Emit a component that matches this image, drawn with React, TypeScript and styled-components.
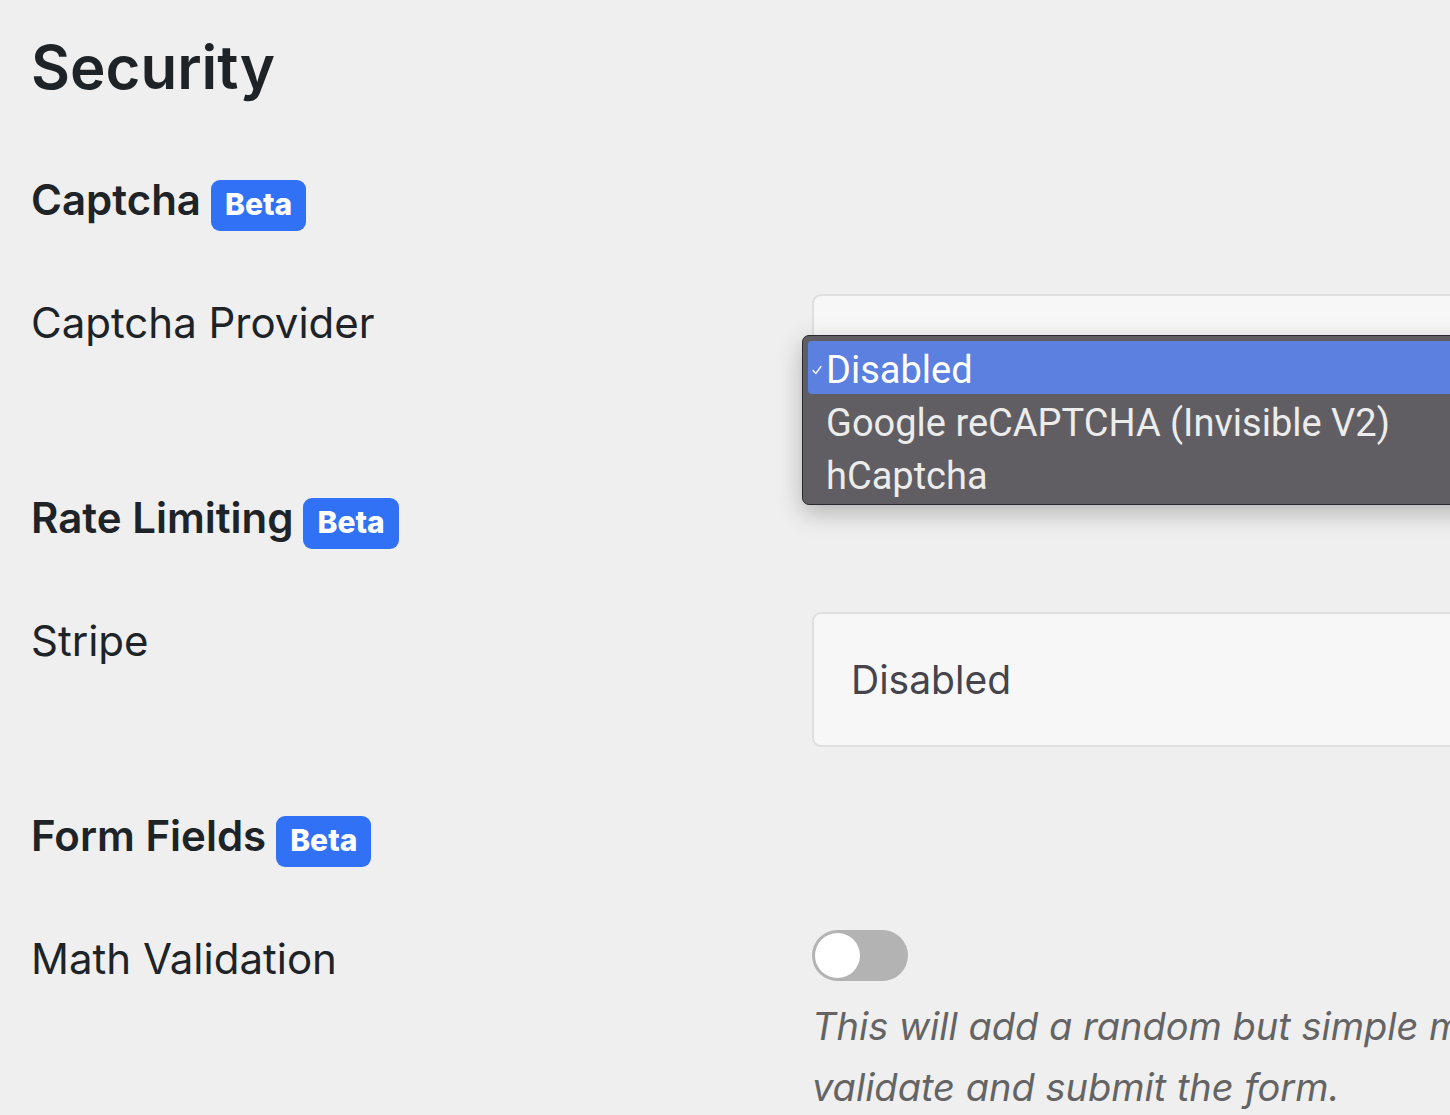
import React from "react";
import styled, { createGlobalStyle } from "styled-components";

const Global = createGlobalStyle`
  html, body { margin: 0; padding: 0; overflow: hidden; }
  body {
    background: #efefef;
    font-family: Inter, "Noto Sans", sans-serif;
    color: #1d2327;
    width: 1450px;
    height: 1115px;
  }
`;

const Page = styled.main`
  padding: 29px 0 0 31px;
`;

const Title = styled.h1`
  margin: 0 0 72px;
  font-size: 60px;
  line-height: 77px;
  font-weight: 600;
`;

const Section = styled.section`
  margin-bottom: 67px;
`;

const SectionHead = styled.h2`
  display: flex;
  align-items: baseline;
  gap: 10px;
  margin: 0 0 63px;
  font-size: 42px;
  line-height: 44px;
  font-weight: 600;
`;

const Badge = styled.span`
  display: inline-block;
  background: #3171f5;
  color: #fff;
  font-size: 30px;
  line-height: 30px;
  font-weight: 800;
  padding: 9px 14px 12px;
  border-radius: 9px;
`;

const Row = styled.div`
  display: grid;
  grid-template-columns: 781px 900px;
  align-items: start;
`;

const Label = styled.div`
  font-size: 42px;
  line-height: 48px;
  font-weight: 400;
  padding-top: 5px;
`;

const Control = styled.div`
  position: relative;
`;

const SelectBox = styled.div`
  box-sizing: border-box;
  height: 135px;
  width: 900px;
  background: #f7f7f7;
  border: 2px solid #dfdfe0;
  border-radius: 9px;
  display: flex;
  align-items: center;
  padding-left: 37px;
  font-size: 39px;
  color: #45444c;
`;

const Popup = styled.div`
  position: absolute;
  left: -10px;
  top: 41px;
  width: 760px;
  height: 170px;
  box-sizing: border-box;
  background: #605e63;
  border: 1px solid #2b2a2e;
  border-radius: 7px;
  box-shadow: 0 8px 24px rgba(0, 0, 0, 0.25);
  padding: 5px 5px;
  font-family: Roboto, Inter, sans-serif;
  color: #ececec;
`;

const Option = styled.div<{ $active?: boolean }>`
  position: relative;
  box-sizing: border-box;
  height: 53px;
  display: flex;
  align-items: center;
  padding: 5px 0 0 18px;
  font-size: 38px;
  border-radius: 4px;
  background: ${(p) => (p.$active ? "#5b80e0" : "transparent")};
  color: ${(p) => (p.$active ? "#ffffff" : "#ececec")};
`;

const Check = styled.svg`
  position: absolute;
  left: 4px;
  top: 24px;
`;

const Toggle = styled.div`
  width: 96px;
  height: 51px;
  border-radius: 26px;
  background: #b3b3b3;
  box-sizing: border-box;
  padding: 3px;
  display: flex;
  align-items: center;
`;

const Knob = styled.span`
  width: 45px;
  height: 45px;
  border-radius: 50%;
  background: #fff;
`;

const Description = styled.p`
  margin: 15px 0 0;
  font-size: 38px;
  line-height: 61px;
  font-style: italic;
  color: #646464;
  white-space: nowrap;
`;

export default function App() {
  return (
    <>
      <Global />
      <Page>
        <Title>Security</Title>

        <Section>
          <SectionHead>
            Captcha <Badge>Beta</Badge>
          </SectionHead>
          <Row>
            <Label>Captcha Provider</Label>
            <Control>
              <SelectBox />
              <Popup>
                <Option $active>
                  <Check width="10" height="10" viewBox="0 0 10 10">
                    <path d="M1 5.5 L3.8 8.5 L9 1.5" fill="none" stroke="#ffffff" strokeWidth="1.3" strokeLinecap="round" strokeLinejoin="round" />
                  </Check>
                  Disabled
                </Option>
                <Option>Google reCAPTCHA (Invisible V2)</Option>
                <Option>hCaptcha</Option>
              </Popup>
            </Control>
          </Row>
        </Section>

        <Section>
          <SectionHead>
            Rate Limiting <Badge>Beta</Badge>
          </SectionHead>
          <Row>
            <Label>Stripe</Label>
            <Control>
              <SelectBox>Disabled</SelectBox>
            </Control>
          </Row>
        </Section>

        <Section>
          <SectionHead>
            Form Fields <Badge>Beta</Badge>
          </SectionHead>
          <Row>
            <Label>Math Validation</Label>
            <Control>
              <Toggle>
                <Knob />
              </Toggle>
              <Description>
                This will add a random but simple math question to
                <br />
                validate and submit the form.
              </Description>
            </Control>
          </Row>
        </Section>
      </Page>
    </>
  );
}
